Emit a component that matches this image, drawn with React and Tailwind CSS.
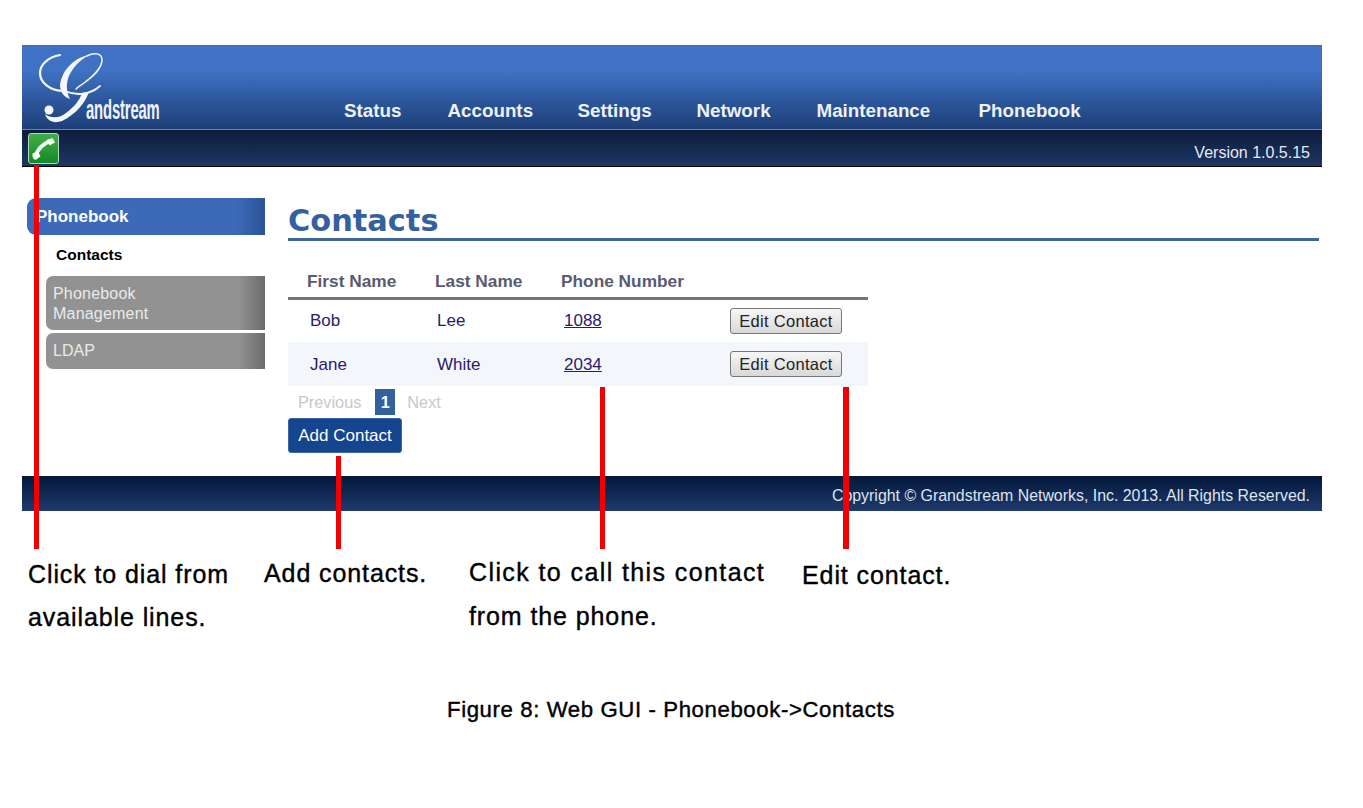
import React from 'react'

const navItems = [
  { label: 'Status', width: 'w-[103.5px]' },
  { label: 'Accounts', width: 'w-[130px]' },
  { label: 'Settings', width: 'w-[119px]' },
  { label: 'Network', width: 'w-[120px]' },
  { label: 'Maintenance', width: 'w-[162px]' },
  { label: 'Phonebook', width: 'w-[110px]' },
]

const contacts = [
  { first: 'Bob', last: 'Lee', phone: '1088', rowBg: 'bg-white' },
  { first: 'Jane', last: 'White', phone: '2034', rowBg: 'bg-[#f3f6fb]' },
]

function Logo() {
  return (
    <div className="relative w-[140px] h-[84px] shrink-0">
      <svg width="140" height="84" viewBox="0 0 140 84" fill="none" className="absolute left-0 top-0">
        {/* calligraphic swash of the logo */}
        <path d="M28 10 C16 12 8 20 8 28 C8 38 18 45 30 46" stroke="#f4f7fc" strokeWidth="2.2" strokeLinecap="round" />
        <path d="M57 10 C44 12 30 24 28 40 C28 47 32 52 38 54 C34 46 34 38 37 31 C41 22 48 15 57 10 Z" fill="#f4f7fc" />
        <path d="M55 11 C62 7 70 8 70 15 C70 24 60 32 52 38 C48 41 46 42 44 44" stroke="#f4f7fc" strokeWidth="1.5" strokeLinecap="round" />
        <path d="M33 46 C44 51 58 50 68 41" stroke="#f4f7fc" strokeWidth="1.8" strokeLinecap="round" />
        <path d="M57 47 C53 58 44 69 30 76 C22 79 15 76 13 69 C19 74 28 73 34 68 C42 62 48 55 50 48 Z" fill="#f4f7fc" />
        <circle cx="17" cy="65" r="4.5" fill="#f4f7fc" />
      </svg>
      <span className="absolute left-[54px] top-[49px] origin-left scale-x-[0.53] font-['Liberation_Sans',sans-serif] text-[28px] leading-[32px] font-bold tracking-[-0.3px] text-[#eef2f9] whitespace-nowrap">
        andstream
      </span>
    </div>
  )
}

function PhoneButton() {
  return (
    <button className="w-[31px] h-[31px] rounded-[3px] border border-[#b5d8b5] bg-gradient-to-b from-[#3fae47] to-[#0f8a28] flex items-center justify-center">
      <svg width="25" height="25" viewBox="0 0 25 25" fill="none">
        <path d="M5 19 C7 13 12 8 19 5" stroke="#f6fbf6" strokeWidth="4" strokeLinecap="round" />
        <path d="M15.5 4 L21.5 2 L24 6.5 L18.5 9.5 Z" fill="#f6fbf6" />
        <path d="M1.5 17.5 L7 15 L9.5 20.5 L4.5 24 Q1 23 1.5 17.5 Z" fill="#f6fbf6" />
      </svg>
    </button>
  )
}

function Sidebar() {
  return (
    <aside className="w-[238px] ml-[5px] shrink-0 pt-[31px] font-['Liberation_Sans',sans-serif]">
      <div className="h-[37px] flex items-center pl-[9px] rounded-l-[9px] bg-gradient-to-r from-[#3c6ab8] from-88% to-[#2b5398] text-white text-[17px] font-bold">
        Phonebook
      </div>
      <div className="h-[39px] mb-[2px] flex items-center pl-[29px] text-[15.5px] font-bold text-black">Contacts</div>
      <div className="ml-[19px] h-[54px] rounded-l-[7px] bg-gradient-to-r from-[#929292] from-88% to-[#6c6c6c] pl-[7px] pt-[8px] text-[16px] leading-[19.5px] tracking-[0.2px] text-[#eaeaea]">
        Phonebook<br />Management
      </div>
      <div className="ml-[19px] mt-[3px] h-[36px] rounded-l-[7px] bg-gradient-to-r from-[#929292] from-88% to-[#6c6c6c] pl-[7px] flex items-center text-[16px] text-[#eaeaea]">
        LDAP
      </div>
    </aside>
  )
}

function ContactsTable() {
  return (
    <table className="w-[580px] table-fixed border-collapse font-['Liberation_Sans',sans-serif]">
      <thead>
        <tr className="h-[26px] border-b-[3px] border-[#757575] text-left text-[17.3px] font-bold text-[#5a5a70]">
          <th className="w-[147px] pl-[19px] pb-[2px] font-bold">First Name</th>
          <th className="w-[126px] pb-[2px] font-bold">Last Name</th>
          <th className="w-[169px] pb-[2px] font-bold whitespace-nowrap">Phone Number</th>
          <th></th>
        </tr>
      </thead>
      <tbody>
        {contacts.map((c) => (
          <tr key={c.first} className={`h-[44px] text-[17px] text-[#2b1a6b] ${c.rowBg}`}>
            <td className="pl-[22px]">{c.first}</td>
            <td className="pl-[2px]">{c.last}</td>
            <td className="pl-[3px]">
              <a href="#" className="underline">{c.phone}</a>
            </td>
            <td>
              <button className="w-[112px] h-[26px] rounded-[3px] border border-[#777] bg-gradient-to-b from-[#f6f6f6] to-[#d9d9d9] text-[16.5px] tracking-[0.3px] text-[#222]">
                Edit Contact
              </button>
            </td>
          </tr>
        ))}
      </tbody>
    </table>
  )
}

export default function App() {
  return (
    <div className="relative w-[1363px] h-[808px] overflow-hidden bg-white pt-[45px] pl-[22px] font-['Liberation_Sans',sans-serif]">
      <div className="w-[1300px]">
        {/* Header */}
        <header className="h-[85px] flex bg-gradient-to-b from-[#3f72c4] from-30% to-[#1d3f78] border-b border-[#5d86c6] pl-[10px]">
          <Logo />
          <nav className="flex items-end pb-[4px] pl-[172px] text-[18.8px] font-bold text-[#edf1f8]">
            {navItems.map((item) => (
              <span key={item.label} className={`${item.width} whitespace-nowrap`}>{item.label}</span>
            ))}
          </nav>
        </header>
        <div className="h-[37px] flex items-center justify-between pl-[6px] pr-[12px] bg-gradient-to-b from-[#0d1c3c] to-[#1d3763] border-b border-black">
          <PhoneButton />
          <span className="mt-[9px] text-[16px] text-[#e6e9f0]">Version 1.0.5.15</span>
        </div>

        {/* Body */}
        <div className="h-[309px] flex">
          <Sidebar />
          <main className="ml-[23px] w-[1031px] pt-[36px]">
            <h1 className="h-[38px] border-b-[3px] border-[#3e659f] font-['DejaVu_Sans',sans-serif] text-[30.4px] leading-[35px] font-bold text-[#33609f]">
              Contacts
            </h1>
            <div className="mt-[28px]">
              <ContactsTable />
            </div>
            <div className="mt-[2px] h-[27px] flex items-center text-[16.3px] text-[#c8c8c8]">
              <span className="ml-[10px]">Previous</span>
              <span className="ml-[14px] w-[20px] h-[26px] flex items-center justify-center bg-[#33609f] font-bold text-white">1</span>
              <span className="ml-[12px]">Next</span>
            </div>
            <button className="mt-[3px] w-[114px] h-[35px] rounded-[3px] bg-[#16458f] border border-[#3c66a8] text-[17px] text-white">
              Add Contact
            </button>
          </main>
        </div>

        {/* Footer */}
        <footer className="h-[35px] flex items-center justify-end pr-[12px] pt-[4px] bg-gradient-to-b from-[#04183a] to-[#1f3a6e] text-[15.9px] text-[#dfe4ee]">
          Copyright © Grandstream Networks, Inc. 2013. All Rights Reserved.
        </footer>
      </div>

      {/* Captions */}
      <div className="flex mt-[42px] pl-[6px] text-[25px] tracking-[0.9px] leading-[44px] text-black [-webkit-text-stroke:0.4px_black]">
        <p className="w-[236px] leading-[43px]">Click to dial from<br />available lines.</p>
        <p className="w-[205px] -mt-[2px]">Add contacts.</p>
        <p className="w-[333px] -mt-[3px]"><span className="tracking-[1.4px]">Click to call this contact</span><br />from the phone.</p>
        <p>Edit contact.</p>
      </div>
      <p className="mt-[58px] ml-[425px] text-[22.2px] leading-[26px] tracking-[0.6px] text-black [-webkit-text-stroke:0.4px_black]">
        Figure 8: Web GUI - Phonebook-&gt;Contacts
      </p>

      {/* Callout lines */}
      <div className="absolute left-[34px] top-[165px] w-[5px] h-[384px] bg-[#f00000]" />
      <div className="absolute left-[336px] top-[456px] w-[5px] h-[93px] bg-[#f00000]" />
      <div className="absolute left-[600px] top-[387px] w-[5px] h-[162px] bg-[#f00000]" />
      <div className="absolute left-[843px] top-[387px] w-[6px] h-[162px] bg-[#f00000]" />
    </div>
  )
}
